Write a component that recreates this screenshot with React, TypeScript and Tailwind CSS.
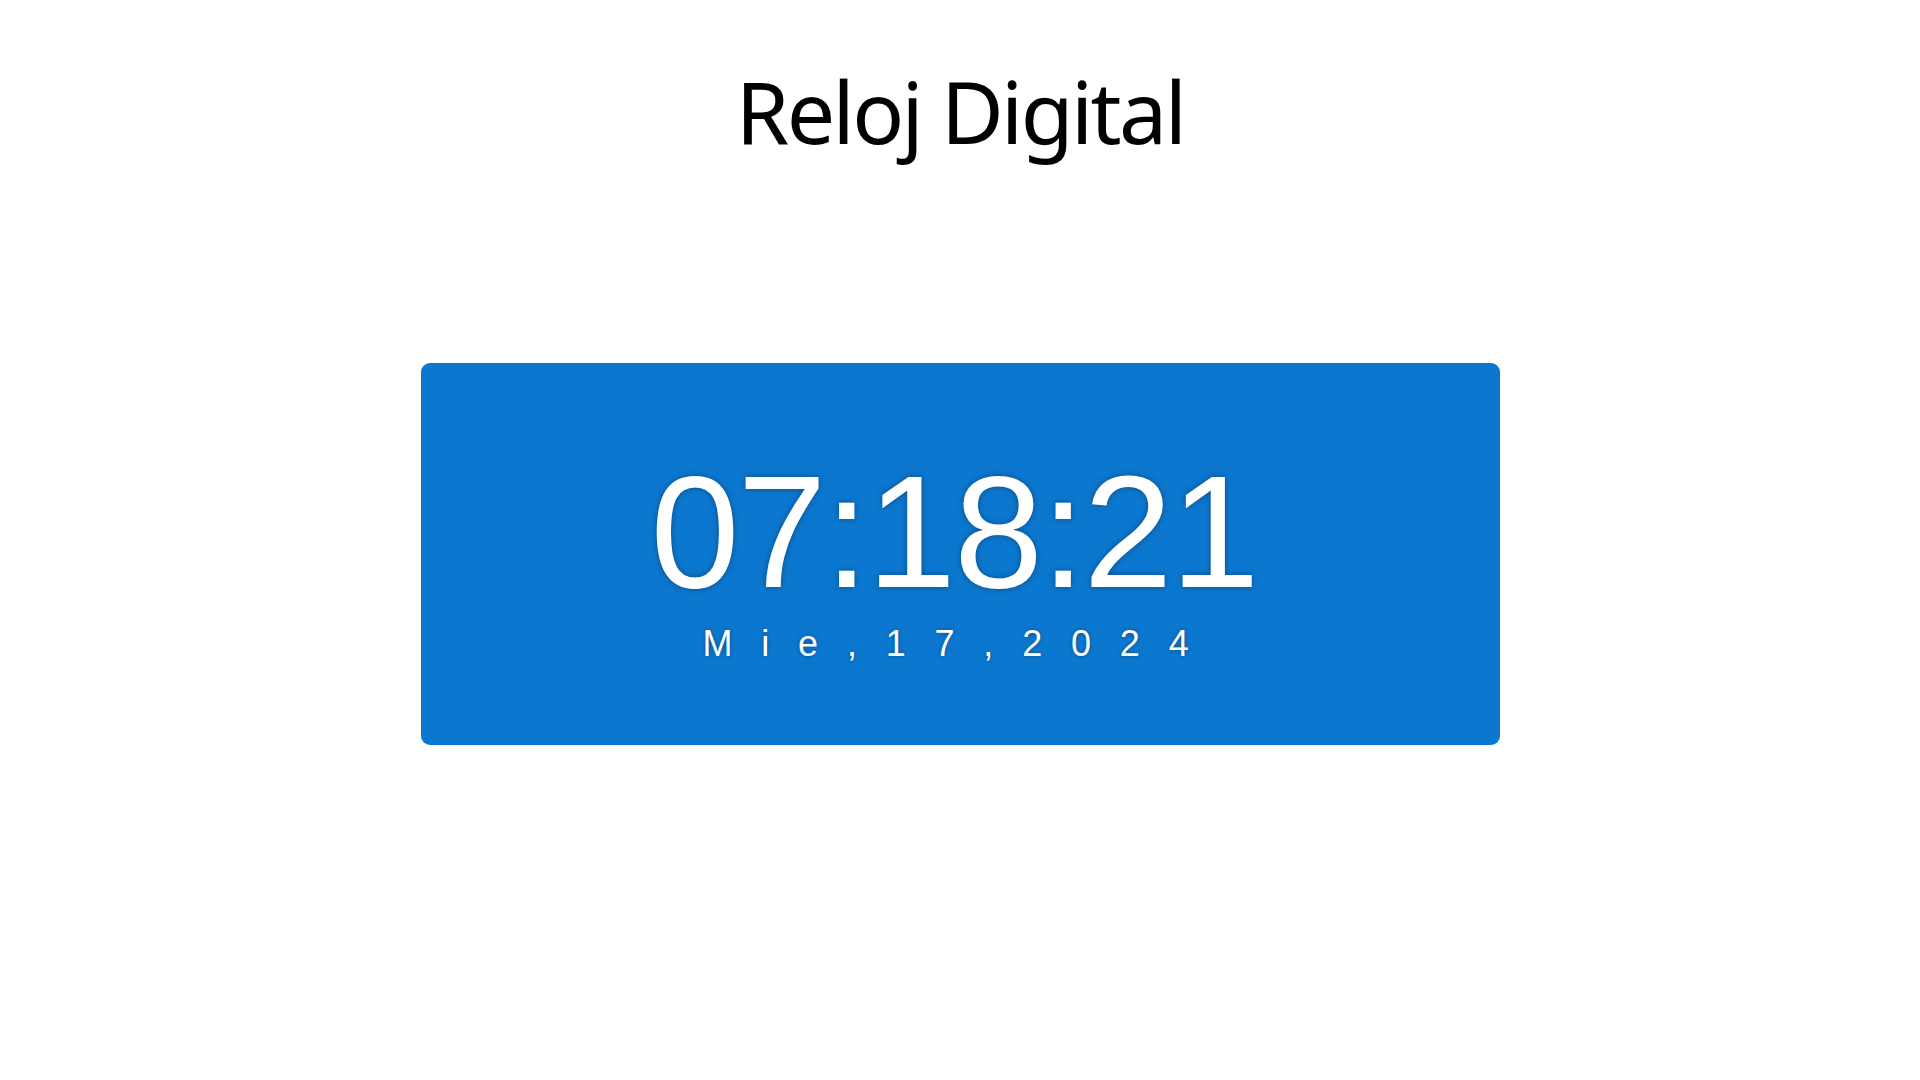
import React from "react";

export default function App() {
  return (
    <div className="min-h-screen w-full bg-white flex flex-col items-center">
      <h1 className="mt-[68px] text-[86px] leading-none text-black font-normal tracking-[-2.6px] font-['Noto_Sans','Open_Sans',sans-serif]">
        Reloj Digital
      </h1>
      <div className="mt-[209px] w-[1079px] h-[382px] rounded-[9px] bg-[#0c77cf] flex flex-col items-center pt-[89px]">
        <div className="pr-[12px] text-[160px] leading-none text-white tracking-[-2px] font-['Liberation_Sans',Arial,sans-serif] [text-shadow:0_0_6px_rgba(0,0,0,0.35)]">
          07:18:21
        </div>
        <div className="mt-[14px] text-[36px] leading-none text-white tracking-[28.8px] font-['Liberation_Sans',Arial,sans-serif] [text-shadow:0_0_4px_rgba(0,0,0,0.35)]">
          Mie,17,2024
        </div>
      </div>
    </div>
  );
}
